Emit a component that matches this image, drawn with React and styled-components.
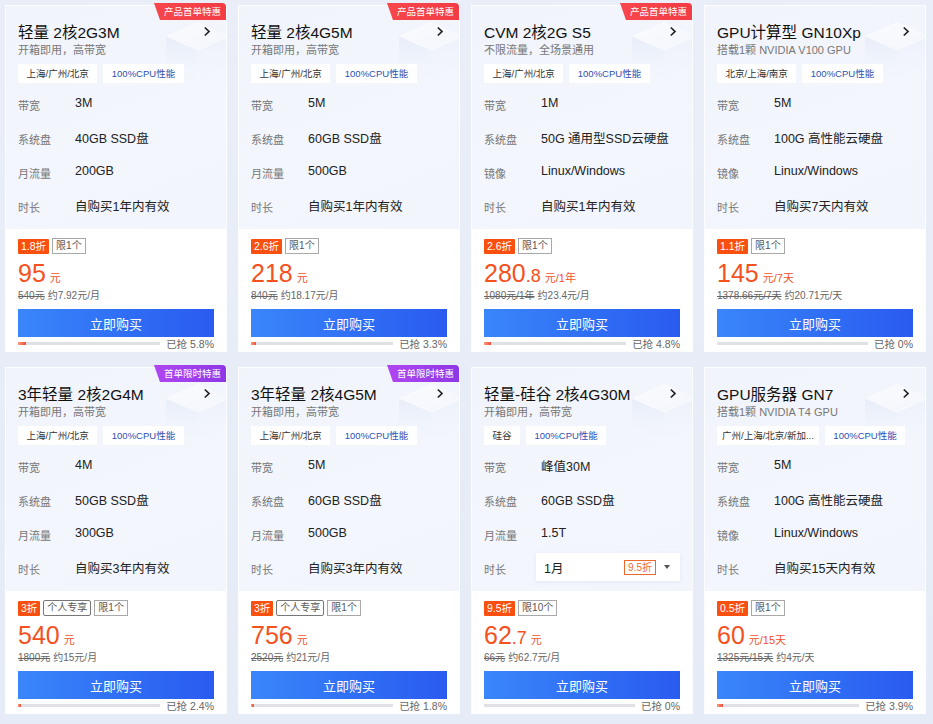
import React from "react";
import styled, { createGlobalStyle } from "styled-components";

const Global = createGlobalStyle`
  html, body { margin: 0; padding: 0; }
  body {
    background: #e8eef8;
    font-family: "Liberation Sans", "Noto Sans CJK SC", sans-serif;
    color: #222;
  }
`;

const Page = styled.div`
  width: 933px;
  height: 724px;
  box-sizing: border-box;
  padding: 6px 0 0 6px;
  background: linear-gradient(180deg, #e9eef8 0%, #e6ecf7 100%);
  overflow: hidden;
`;

const Grid = styled.div`
  display: grid;
  grid-template-columns: repeat(4, 220px);
  column-gap: 13px;
  row-gap: 17px;
`;

const Card = styled.div`
  position: relative;
  width: 220px;
  height: 345px;
  display: flex;
  flex-direction: column;
  box-shadow: 0 0 0 1px rgba(255, 255, 255, 0.85);
`;

const Top = styled.div`
  position: relative;
  height: 223px;
  box-sizing: border-box;
  padding: 14px 12px 0 12px;
  background: linear-gradient(160deg, #f1f4fb 0%, #f3f6fd 60%, #f2f5fc 100%);
  overflow: hidden;
`;

const Deco = styled.svg`
  position: absolute;
  top: 0;
  right: 0;
  pointer-events: none;
`;

const Ribbon = styled.div`
  position: absolute;
  top: -3px;
  right: 0;
  height: 17px;
  line-height: 17px;
  padding: 0 5px 0 10px;
  font-size: 9.5px;
  color: #fff;
  border-top-right-radius: 4px;
  clip-path: polygon(0 0, 100% 0, 100% 100%, 6px 100%);
  background: ${(p) =>
    p.$purple
      ? "linear-gradient(90deg, #b046f2, #8e37e6)"
      : "linear-gradient(90deg, #f7464c, #f33c45)"};
  z-index: 2;
`;

const TitleRow = styled.div`
  position: relative;
  display: flex;
  align-items: center;
  justify-content: space-between;
  height: 22px;
`;

const Title = styled.div`
  font-size: 15.5px;
  color: #111;
  white-space: nowrap;
`;

const Chevron = styled.svg`
  margin-right: 3px;
`;

const Sub = styled.div`
  position: relative;
  font-size: 11px;
  line-height: 17px;
  color: #777;
`;

const Tags = styled.div`
  position: relative;
  display: flex;
  gap: 6px;
  margin-top: 5px;
`;

const Tag = styled.div`
  height: 19px;
  line-height: 19px;
  padding: 0 ${(p) => (p.$wide ? 5 : 8.5)}px;
  background: #fff;
  font-size: 9.5px;
  color: ${(p) => (p.$blue ? "#2d4fb3" : "#333")};
  white-space: nowrap;
`;

const Specs = styled.div`
  position: relative;
  margin-top: 3px;
  display: flex;
  flex-direction: column;
`;

const Spec = styled.div`
  display: flex;
  align-items: center;
  height: 34px;
`;

const Label = styled.div`
  width: 57px;
  flex: none;
  font-size: 11px;
  color: #777;
  padding-top: 3px;
`;

const Value = styled.div`
  font-size: 12.5px;
  color: #222;
  white-space: nowrap;
`;

const Select = styled.div`
  margin-left: -5px;
  flex: 1;
  height: 28px;
  background: #fff;
  display: flex;
  align-items: center;
  padding: 0 8px;
  box-sizing: border-box;
  box-shadow: 0 1px 4px rgba(60, 90, 150, 0.08);
  font-size: 12.5px;
  color: #222;
`;

const SelectText = styled.div`
  flex: 1;
`;

const OutlineTag = styled.div`
  height: 13px;
  line-height: 13px;
  padding: 0 3px;
  border: 1px solid #ee6a2c;
  color: #ee6a2c;
  font-size: 10px;
  margin-right: 8px;
`;

const Caret = styled.div`
  width: 0;
  height: 0;
  border-left: 3.5px solid transparent;
  border-right: 3.5px solid transparent;
  border-top: 4px solid #555;
  margin-right: 2px;
`;

const Bottom = styled.div`
  flex: 1;
  background: #fff;
  padding: 9px 12px 0 12px;
  display: flex;
  flex-direction: column;
`;

const Badges = styled.div`
  display: flex;
  gap: 3px;
  height: 16px;
  align-items: center;
`;

const Discount = styled.div`
  height: 15px;
  line-height: 15px;
  padding: 0 3px;
  background: #f9500f;
  color: #fff;
  font-size: 10.5px;
  border-radius: 1px;
`;

const Limit = styled.div`
  height: 14px;
  line-height: 14px;
  padding: 0 3px;
  border: 1px solid ${(p) => (p.$dark ? "#777" : "#a8a8a8")};
  border-radius: ${(p) => (p.$dark ? "2px" : "0")};
  color: #555;
  font-size: 10px;
`;

const PriceRow = styled.div`
  margin-top: 4px;
  height: 30px;
  display: flex;
  align-items: baseline;
  color: #f4511e;
`;

const Big = styled.span`
  font-size: 25px;
  line-height: 30px;
`;

const Frac = styled.span`
  font-size: 18px;
`;

const Unit = styled.span`
  font-size: 11px;
  margin-left: 4px;
`;

const Orig = styled.div`
  height: 16px;
  line-height: 16px;
  font-size: 10px;
  color: #666;
  white-space: nowrap;
`;

const Strike = styled.span`
  text-decoration: line-through;
  margin-right: 3px;
`;

const BuyButton = styled.button`
  margin-top: 5px;
  height: 28px;
  border: none;
  padding: 0;
  background: linear-gradient(90deg, #3a86fb 0%, #2f6ef4 55%, #2a5bf0 100%);
  color: #fff;
  font-family: inherit;
  font-size: 13px;
  cursor: pointer;
`;

const Progress = styled.div`
  height: 13px;
  display: flex;
  align-items: center;
  gap: 6px;
`;

const Track = styled.div`
  flex: 1;
  height: 3px;
  background: #dfe1e7;
  position: relative;
`;

const Fill = styled.div`
  height: 100%;
  background: linear-gradient(90deg, #f99a7c, #f24c3a);
`;

const Sold = styled.div`
  font-size: 10.5px;
  color: #666;
  white-space: nowrap;
`;

const cards = [
  {
    title: "轻量 2核2G3M", sub: "开箱即用，高带宽", ribbon: "产品首单特惠",
    tags: ["上海/广州/北京", "100%CPU性能"],
    specs: [["带宽", "3M"], ["系统盘", "40GB SSD盘"], ["月流量", "200GB"], ["时长", "自购买1年内有效"]],
    disc: "1.8折", limits: ["限1个"], price: "95", unit: "元", orig: "540元", per: "约7.92元/月", sold: 5.8,
  },
  {
    title: "轻量 2核4G5M", sub: "开箱即用，高带宽", ribbon: "产品首单特惠",
    tags: ["上海/广州/北京", "100%CPU性能"],
    specs: [["带宽", "5M"], ["系统盘", "60GB SSD盘"], ["月流量", "500GB"], ["时长", "自购买1年内有效"]],
    disc: "2.6折", limits: ["限1个"], price: "218", unit: "元", orig: "840元", per: "约18.17元/月", sold: 3.3,
  },
  {
    title: "CVM 2核2G S5", sub: "不限流量，全场景通用", ribbon: "产品首单特惠",
    tags: ["上海/广州/北京", "100%CPU性能"],
    specs: [["带宽", "1M"], ["系统盘", "50G 通用型SSD云硬盘"], ["镜像", "Linux/Windows"], ["时长", "自购买1年内有效"]],
    disc: "2.6折", limits: ["限1个"], price: "280", frac: ".8", unit: "元/1年", orig: "1080元/1年", per: "约23.4元/月", sold: 4.8,
  },
  {
    title: "GPU计算型 GN10Xp", sub: "搭载1颗 NVIDIA V100 GPU",
    tags: ["北京/上海/南京", "100%CPU性能"],
    specs: [["带宽", "5M"], ["系统盘", "100G 高性能云硬盘"], ["镜像", "Linux/Windows"], ["时长", "自购买7天内有效"]],
    disc: "1.1折", limits: ["限1个"], price: "145", unit: "元/7天", orig: "1378.66元/7天", per: "约20.71元/天", sold: 0,
  },
  {
    title: "3年轻量 2核2G4M", sub: "开箱即用，高带宽", ribbon: "首单限时特惠", purple: true,
    tags: ["上海/广州/北京", "100%CPU性能"],
    specs: [["带宽", "4M"], ["系统盘", "50GB SSD盘"], ["月流量", "300GB"], ["时长", "自购买3年内有效"]],
    disc: "3折", personal: true, limits: ["限1个"], price: "540", unit: "元", orig: "1800元", per: "约15元/月", sold: 2.4,
  },
  {
    title: "3年轻量 2核4G5M", sub: "开箱即用，高带宽", ribbon: "首单限时特惠", purple: true,
    tags: ["上海/广州/北京", "100%CPU性能"],
    specs: [["带宽", "5M"], ["系统盘", "60GB SSD盘"], ["月流量", "500GB"], ["时长", "自购买3年内有效"]],
    disc: "3折", personal: true, limits: ["限1个"], price: "756", unit: "元", orig: "2520元", per: "约21元/月", sold: 1.8,
  },
  {
    title: "轻量-硅谷 2核4G30M", sub: "开箱即用，高带宽",
    tags: ["硅谷", "100%CPU性能"],
    specs: [["带宽", "峰值30M"], ["系统盘", "60GB SSD盘"], ["月流量", "1.5T"], ["时长", null]],
    disc: "9.5折", limits: ["限10个"], price: "62", frac: ".7", unit: "元", orig: "66元", per: "约62.7元/月", sold: 0,
  },
  {
    title: "GPU服务器 GN7", sub: "搭载1颗 NVIDIA T4 GPU",
    tags: ["广州/上海/北京/新加...", "100%CPU性能"], wideTags: true,
    specs: [["带宽", "5M"], ["系统盘", "100G 高性能云硬盘"], ["镜像", "Linux/Windows"], ["时长", "自购买15天内有效"]],
    disc: "0.5折", limits: ["限1个"], price: "60", unit: "元/15天", orig: "1325元/15天", per: "约4元/天", sold: 3.9,
  },
];

function Decoration() {
  return (
    <Deco width="80" height="80" viewBox="0 0 80 80">
      <defs>
        <linearGradient id="dgTop" x1="0" y1="0" x2="1" y2="1">
          <stop offset="0" stopColor="#ffffff" stopOpacity="0.7" />
          <stop offset="1" stopColor="#f4f7fd" stopOpacity="0.4" />
        </linearGradient>
        <linearGradient id="dgLeft" x1="0" y1="0" x2="0" y2="1">
          <stop offset="0" stopColor="#e3e9f7" stopOpacity="0.7" />
          <stop offset="1" stopColor="#eef2fb" stopOpacity="0" />
        </linearGradient>
        <linearGradient id="dgRight" x1="0" y1="0" x2="0" y2="1">
          <stop offset="0" stopColor="#e9eef9" stopOpacity="0.6" />
          <stop offset="1" stopColor="#f1f4fc" stopOpacity="0" />
        </linearGradient>
      </defs>
      <polygon points="20,30 52,16 84,30 52,44" fill="url(#dgTop)" />
      <polygon points="20,30 52,44 52,72 20,58" fill="url(#dgLeft)" />
      <polygon points="52,44 84,30 84,58 52,72" fill="url(#dgRight)" />
      <polyline points="20,30 52,44 84,30" fill="none" stroke="#ffffff" strokeOpacity="0.6" strokeWidth="1" />
    </Deco>
  );
}

function ProductCard({ c }) {
  return (
    <Card>
      {c.ribbon && <Ribbon $purple={c.purple}>{c.ribbon}</Ribbon>}
      <Top>
        <Decoration />
        <TitleRow>
          <Title>{c.title}</Title>
          <Chevron width="8" height="11" viewBox="0 0 8 11">
            <path d="M1.8 1.5 L6 5.5 L1.8 9.5" fill="none" stroke="#222" strokeWidth="1.7" />
          </Chevron>
        </TitleRow>
        <Sub>{c.sub}</Sub>
        <Tags>
          <Tag $wide={c.wideTags}>{c.tags[0]}</Tag>
          <Tag $blue>{c.tags[1]}</Tag>
        </Tags>
        <Specs>
          {c.specs.map(([k, v]) => (
            <Spec key={k}>
              <Label>{k}</Label>
              {v === null ? (
                <Select>
                  <SelectText>1月</SelectText>
                  <OutlineTag>9.5折</OutlineTag>
                  <Caret />
                </Select>
              ) : (
                <Value>{v}</Value>
              )}
            </Spec>
          ))}
        </Specs>
      </Top>
      <Bottom>
        <Badges>
          <Discount>{c.disc}</Discount>
          {c.personal && <Limit $dark>个人专享</Limit>}
          {c.limits.map((l) => (
            <Limit key={l}>{l}</Limit>
          ))}
        </Badges>
        <PriceRow>
          <Big>{c.price}</Big>
          {c.frac && <Frac>{c.frac}</Frac>}
          <Unit>{c.unit}</Unit>
        </PriceRow>
        <Orig>
          <Strike>{c.orig}</Strike>
          {c.per}
        </Orig>
        <BuyButton>立即购买</BuyButton>
        <Progress>
          <Track>
            <Fill style={{ width: `${c.sold > 0 ? Math.max(c.sold, 2) : 0}%` }} />
          </Track>
          <Sold>已抢 {c.sold}%</Sold>
        </Progress>
      </Bottom>
    </Card>
  );
}

export default function App() {
  return (
    <>
      <Global />
      <Page>
        <Grid>
          {cards.map((c) => (
            <ProductCard key={c.title} c={c} />
          ))}
        </Grid>
      </Page>
    </>
  );
}
